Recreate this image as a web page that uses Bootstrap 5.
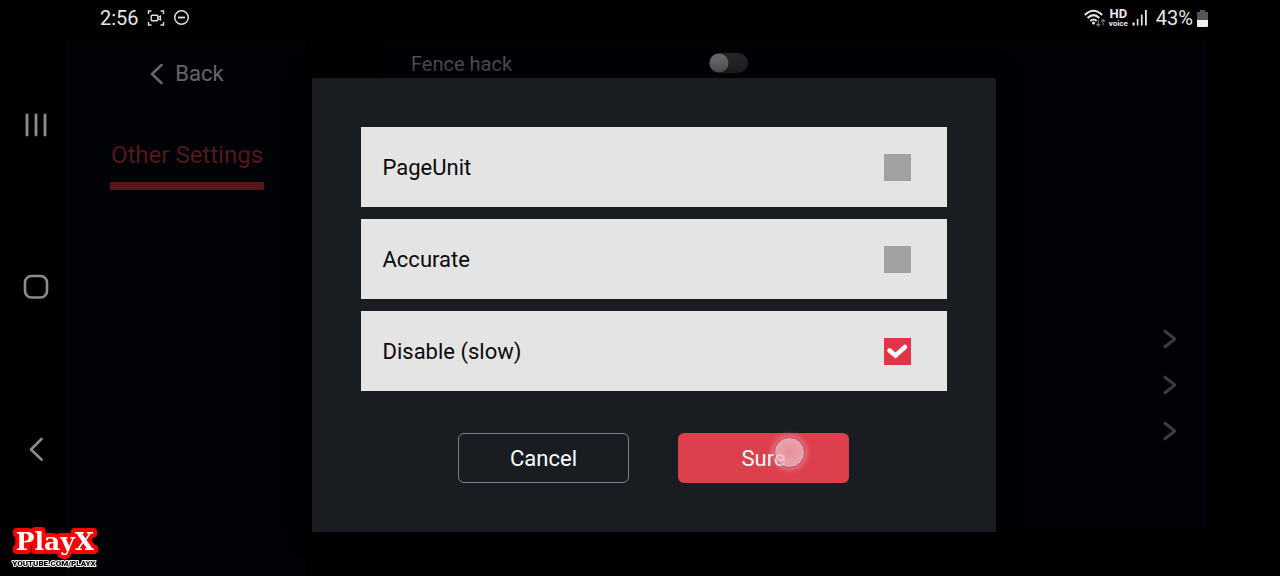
<!DOCTYPE html>
<html lang="en">
<head>
<meta charset="utf-8">
<meta name="viewport" content="width=device-width, initial-scale=1">
<title>Other Settings</title>
<link href="https://cdn.jsdelivr.net/npm/bootstrap@5.3.0/dist/css/bootstrap.min.css" rel="stylesheet">
<style>
  body { background: #000; color: #fff; font-family: Roboto, "Liberation Sans", sans-serif; font-size: 22px; line-height: 28px; }
  svg { display: block; flex: none; }

  .nav-rail { width: 67px; padding: 111px 0 113px; }
  .nav-rail button { width: 71px; height: 28px; color: #8c8c8c; }

  .status-bar { height: 40px; padding: 0 72px 5px 33px; font-size: 20px; color: #e6e6e6; }
  .status-bar .hd { font-size: 13px; line-height: 11px; font-weight: 700; }
  .status-bar .voice { font-size: 8px; line-height: 9px; font-weight: 700; }

  .side-menu { width: 240px; background: #010206; padding-top: 20px; }
  .back-link { color: #666; gap: 12px; }
  .tab-link { color: #56171b; font-size: 24px; line-height: 32px; padding: 0 1px 11px; border-bottom: 8px solid #56171b; margin-top: 51px; }

  .settings-panel { background: #010206; margin: 0 74px 48px 73px; padding: 0 30px 0 31px; }
  .setting-row { height: 46px; font-size: 20px; color: #555; }
  .setting-row label { width: 39%; padding-top: 2px; }
  .setting-row .form-check-input { width: 39px; height: 20px; margin: 0; border: 0; background-color: #252627;
    background-image: url("data:image/svg+xml,%3Csvg xmlns='http://www.w3.org/2000/svg' viewBox='0 0 20 20'%3E%3Ccircle cx='10' cy='10' r='9.5' fill='%23696969'/%3E%3C/svg%3E"); background-size: 20px 20px; }
  .more-links { margin-top: 230px; }
  .more-links .setting-row { color: #3c3c3e; }

  .dialog-layer { padding: 38px 40px 0 0; }
  .option-dialog { width: 684px; background: #191c20; padding: 49px; box-shadow: 0 0 24px #000; border-radius: 2px; }
  .option-list { gap: 12px; }
  .option-item { height: 80px; background: #e4e4e4; color: #0a0a0a; padding: 0 36px 0 22px; }
  .option-item label { padding-top: 2px; }
  .option-item .form-check-input { width: 27px; height: 27px; margin: 0; border: 0; border-radius: 0; background-color: #a1a1a1; }
  .option-item .form-check-input:checked { background-color: #e13447; background-size: 27px 27px;
    background-image: url("data:image/svg+xml,%3Csvg xmlns='http://www.w3.org/2000/svg' viewBox='0 0 27 27'%3E%3Cpath d='M5.500 12.500l6 5 9.500-8.500' fill='none' stroke='%23fff' stroke-width='4.500' stroke-linecap='round'/%3E%3C/svg%3E"); }
  .dialog-actions { gap: 49px; margin-top: 42px; }
  .dialog-actions .btn { width: 171px; height: 50px; font-size: 22px; line-height: 28px; color: #fff; border-radius: 6px; padding: 2px 0 0; }
  .dialog-actions .btn-cancel { border: 1px solid #7b808e; }
  .btn-sure { background: #dc404c; border: 0; }
  .touch-dot { top: 4px; left: 96px; width: 31px; height: 31px; border: 1px solid #a56597; background: radial-gradient(#eaa5ae, #f0c7cf); opacity: .8; box-shadow: 0 0 6px 1px #eda0a8; }

  .watermark { left: 8px; bottom: 6px; }
</style>
</head>
<body>
<div class="d-flex min-vh-100">
  <nav class="nav-rail d-flex flex-column justify-content-between flex-shrink-0" aria-label="System navigation">
    <button type="button" class="btn p-0 border-0 d-flex justify-content-center align-items-center" aria-label="Recent apps">
      <svg width="24" height="24" viewBox="0 0 24 24" fill="none" stroke="currentColor" stroke-width="2.8" stroke-linecap="round"><path d="M3 2v20M12 2v20M21 2v20"/></svg>
    </button>
    <button type="button" class="btn p-0 border-0 d-flex justify-content-center align-items-center" aria-label="Home">
      <svg width="26" height="26" viewBox="0 0 26 26" fill="none" stroke="currentColor" stroke-width="2.6"><rect x="2" y="2" width="22" height="21.5" rx="6.5"/></svg>
    </button>
    <button type="button" class="btn p-0 border-0 d-flex justify-content-center align-items-center" aria-label="Back">
      <svg width="24" height="24" viewBox="0 0 24 24" fill="none" stroke="currentColor" stroke-width="2.6" stroke-linecap="round" stroke-linejoin="round"><path d="M17.5 2L7 12.5 17.5 22.5"/></svg>
    </button>
  </nav>

  <div class="d-flex flex-column flex-grow-1">
    <header class="status-bar d-flex justify-content-between align-items-center">
      <div class="d-flex align-items-center gap-2">
        <span>2:56</span>
        <svg width="18" height="18" viewBox="0 0 17 18" fill="none" stroke="#e0e0e0" stroke-width="1.4"><path d="M1 5V2h3M13 2h3v3M1 13v3h3M13 16h3v-3"/><rect x="3.7" y="6.2" width="6.6" height="5.6" rx="1"/><path d="M10.5 8.5L13 7v4l-2.5-1.5" stroke-width="1.2"/></svg>
        <svg width="17" height="17" viewBox="0 0 17 17" fill="none" stroke="#e0e0e0" stroke-width="1.5"><circle cx="8.5" cy="8.5" r="6.8"/><path d="M5 8.5h7" stroke-width="1.8"/></svg>
      </div>
      <div class="d-flex align-items-center gap-1">
        <svg width="21" height="18" viewBox="0 0 21 18" fill="none" stroke="#e6e6e6" stroke-width="2"><path d="M.8 6Q9.5-2.5 18.2 6M3.6 9Q9.5 3.2 15.400 9M6.3 12Q9.5 9 12.7 12"/><circle cx="9.5" cy="14" r="1.5" fill="#e6e6e6" stroke="none"/><path d="M14.3 11v6m-2-2l2 2 2-2M19 16.5v-6m-2 2l2-2 2 2" stroke="#777" stroke-width="1.1"/></svg>
        <div class="d-flex flex-column align-items-center"><span class="hd">HD</span><span class="voice">voice</span></div>
        <svg width="16" height="17" viewBox="0 0 16 17" fill="#e6e6e6"><path d="M.5 13.5h2.2V16.500H.5zM4.800 10h1.600v6.500H4.800zM8.900 5.500h1.700v11H8.900zM13 1h1.800v15.500H13z"/></svg>
        <span class="ms-1">43%</span>
        <svg width="11" height="18" viewBox="0 0 11 18"><path d="M3 1h5v2h3v9H0V3h3z" fill="#555"/><path d="M0 11h11v6q0 1-1 1H1q-1 0-1-1z" fill="#eee"/></svg>
      </div>
    </header>

    <div class="position-relative d-flex flex-grow-1">
      <aside class="side-menu d-flex flex-column align-items-center flex-shrink-0">
        <a href="#" class="back-link d-flex align-items-center text-decoration-none">
          <svg width="13" height="21" viewBox="0 0 13 21" fill="none" stroke="currentColor" stroke-width="2.6" stroke-linecap="round" stroke-linejoin="round"><path d="M11.5 1L2 10 11.5 19"/></svg>
          Back
        </a>
        <a href="#" class="tab-link text-decoration-none">Other Settings</a>
      </aside>

      <main class="settings-panel flex-grow-1">
        <div class="setting-row d-flex align-items-center form-switch ps-0">
          <label for="fence">Fence hack</label>
          <input class="form-check-input" type="checkbox" role="switch" id="fence">
        </div>
        <div class="more-links d-flex flex-column align-items-end">
          <a href="#" class="setting-row d-flex align-items-center" aria-label="Open"><svg width="14" height="22" viewBox="0 0 14 22" fill="none" stroke="currentColor" stroke-width="3"><path d="M2 2.5L13 11 2 19.500"/></svg></a>
          <a href="#" class="setting-row d-flex align-items-center" aria-label="Open"><svg width="14" height="22" viewBox="0 0 14 22" fill="none" stroke="currentColor" stroke-width="3"><path d="M2 2.5L13 11 2 19.500"/></svg></a>
          <a href="#" class="setting-row d-flex align-items-center" aria-label="Open"><svg width="14" height="22" viewBox="0 0 14 22" fill="none" stroke="currentColor" stroke-width="3"><path d="M2 2.5L13 11 2 19.500"/></svg></a>
        </div>
      </main>

      <div class="dialog-layer position-absolute top-0 start-0 w-100 h-100 d-flex justify-content-center align-items-start">
        <form class="option-dialog" role="dialog" aria-label="Options">
          <div class="option-list d-flex flex-column">
            <div class="option-item d-flex justify-content-between align-items-center">
              <label for="pageunit">PageUnit</label><input class="form-check-input" type="checkbox" id="pageunit">
            </div>
            <div class="option-item d-flex justify-content-between align-items-center">
              <label for="accurate">Accurate</label><input class="form-check-input" type="checkbox" id="accurate">
            </div>
            <div class="option-item d-flex justify-content-between align-items-center">
              <label for="disable">Disable (slow)</label><input class="form-check-input" type="checkbox" id="disable" checked>
            </div>
          </div>
          <div class="dialog-actions d-flex justify-content-center">
            <button type="button" class="btn btn-cancel">Cancel</button>
            <button type="button" class="btn btn-sure position-relative">Sure<span class="touch-dot position-absolute rounded-circle"></span></button>
          </div>
        </form>
      </div>
    </div>
  </div>
</div>

<svg class="watermark position-fixed" width="94" height="46" viewBox="0 0 94 46" role="img" aria-label="PlayX" paint-order="stroke" stroke-linejoin="round" text-anchor="middle">
  <text x="47" y="26" font-family="DejaVu Serif, serif" font-weight="700" font-size="25" fill="#fff" stroke="#f00" stroke-width="8">PlayX</text>
  <text x="46" y="42" font-family="Roboto, sans-serif" font-weight="900" font-size="8" fill="#000" stroke="#fff" stroke-width="2">YOUTUBE.COM/PLAYX</text>
</svg>
<script src="https://cdn.jsdelivr.net/npm/bootstrap@5.3.0/dist/js/bootstrap.bundle.min.js"></script>
</body>
</html>
